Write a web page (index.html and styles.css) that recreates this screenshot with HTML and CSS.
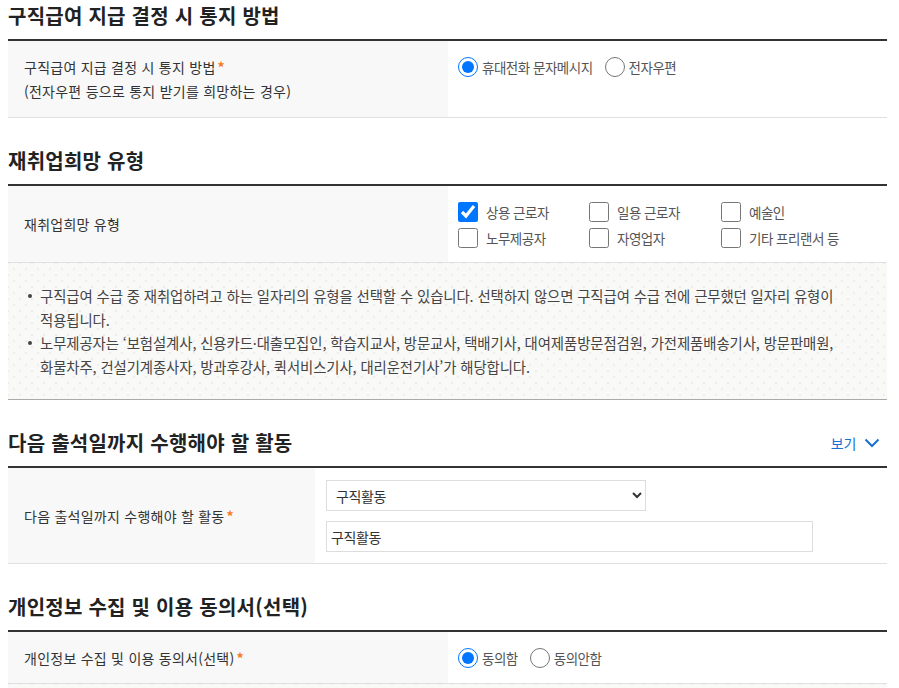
FILE: index.html
```html
<!DOCTYPE html>
<html lang="ko">
<head>
<meta charset="utf-8">
<title>구직급여 신청</title>
<link rel="stylesheet" href="styles.css">
</head>
<body>
<div class="page">
  <section class="sec">
    <div class="sec-head"><h2>구직급여 지급 결정 시 통지 방법</h2></div>
    <div class="tbl">
      <div class="row">
        <div class="lbl half top">구직급여 지급 결정 시 통지 방법<span class="req">*</span><br>(전자우편 등으로 통지 받기를 희망하는 경우)</div>
        <div class="val top">
          <label class="radio"><input type="radio" name="n1" checked><span>휴대전화 문자메시지</span></label>
          <label class="radio"><input type="radio" name="n1"><span>전자우편</span></label>
        </div>
      </div>
    </div>
  </section>

  <section class="sec">
    <div class="sec-head"><h2>재취업희망 유형</h2></div>
    <div class="tbl">
      <div class="row">
        <div class="lbl half mid">재취업희망 유형</div>
        <div class="val checks">
          <label class="chk"><input type="checkbox" checked><span>상용 근로자</span></label>
          <label class="chk"><input type="checkbox"><span>일용 근로자</span></label>
          <label class="chk"><input type="checkbox"><span>예술인</span></label>
          <label class="chk"><input type="checkbox"><span>노무제공자</span></label>
          <label class="chk"><input type="checkbox"><span>자영업자</span></label>
          <label class="chk"><input type="checkbox"><span>기타 프리랜서 등</span></label>
        </div>
      </div>
      <div class="notice">
        <ul>
          <li>구직급여 수급 중 재취업하려고 하는 일자리의 유형을 선택할 수 있습니다. 선택하지 않으면 구직급여 수급 전에 근무했던 일자리 유형이 적용됩니다.</li>
          <li>노무제공자는 ‘보험설계사, 신용카드·대출모집인, 학습지교사, 방문교사, 택배기사, 대여제품방문점검원, 가전제품배송기사, 방문판매원, 화물차주, 건설기계종사자, 방과후강사, 퀵서비스기사, 대리운전기사’가 해당합니다.</li>
        </ul>
      </div>
    </div>
  </section>

  <section class="sec">
    <div class="sec-head">
      <h2>다음 출석일까지 수행해야 할 활동</h2>
      <a class="more" href="#">보기 <svg width="16" height="10" viewBox="0 0 16 10"><polyline points="1.5,1.5 8,8 14.5,1.5" fill="none" stroke="#1a6fd4" stroke-width="2"/></svg></a>
    </div>
    <div class="tbl">
      <div class="row">
        <div class="lbl narrow mid">다음 출석일까지 수행해야 할 활동<span class="req">*</span></div>
        <div class="val fields">
          <select class="sel"><option>구직활동</option></select>
          <input class="txt" type="text" value="구직활동">
        </div>
      </div>
    </div>
  </section>

  <section class="sec">
    <div class="sec-head"><h2>개인정보 수집 및 이용 동의서(선택)</h2></div>
    <div class="tbl">
      <div class="row">
        <div class="lbl half top one">개인정보 수집 및 이용 동의서(선택)<span class="req">*</span></div>
        <div class="val top one">
          <label class="radio"><input type="radio" name="n4" checked><span>동의함</span></label>
          <label class="radio"><input type="radio" name="n4"><span>동의안함</span></label>
        </div>
      </div>
      <div class="notice short"></div>
    </div>
  </section>
</div>
</body>
</html>
```

FILE: styles.css
```css
html, body {
  margin: 0;
  padding: 0;
  background: #fff;
}
body {
  font-family: "Noto Sans CJK KR", "Noto Sans", sans-serif;
  color: #333;
  font-size: 14px;
}
.page {
  width: 879px;
  margin: 0 8px;
}
.sec + .sec {
  margin-top: 27px;
}
.sec-head {
  display: flex;
  justify-content: space-between;
  align-items: center;
  height: 39px;
  padding-bottom: 7px;
  box-sizing: border-box;
}
.sec-head h2 {
  margin: 0;
  font-size: 20px;
  line-height: 32px;
  font-weight: 700;
  color: #222;
  letter-spacing: 0.25px;
}
.more {
  display: flex;
  align-items: center;
  gap: 8px;
  color: #1a6fd4;
  text-decoration: none;
  font-size: 14px;
  padding-right: 7px;
  letter-spacing: -0.3px;
}
.tbl {
  border-top: 2px solid #333;
}
.row {
  display: flex;
  border-bottom: 1px solid #e0e0e0;
}
.lbl {
  background: #f8f8f8;
  padding: 14px 16px;
  box-sizing: border-box;
  line-height: 24px;
  letter-spacing: 0.25px;
  color: #333;
}
.lbl.half { width: 440px; }
.lbl.narrow { width: 307px; }
.lbl.mid {
  display: flex;
  align-items: center;
}
.req {
  color: #f47a1f;
  font-weight: 700;
  margin-left: 2px;
}
.val {
  flex: 1;
  padding: 14px 10px;
  line-height: 24px;
}
.val.top {
  display: flex;
  align-items: flex-start;
  gap: 12px;
}
.radio, .chk {
  display: inline-flex;
  align-items: center;
  color: #555;
  letter-spacing: -0.5px;
  font-size: 13.5px;
}
.radio input {
  width: 20px;
  height: 20px;
  margin: 0 4px 0 0;
  accent-color: #0075ff;
}
.checks {
  display: grid;
  grid-template-columns: 131px 132px 1fr;
  grid-auto-rows: 26px;
  padding: 13px 10px 11px;
}
.chk input {
  width: 20px;
  height: 20px;
  margin: 0 8px 0 0;
  accent-color: #0075ff;
}
.notice {
  background-color: #f9f9f8;
  background-image:
    radial-gradient(circle, #efedeb 1px, transparent 1.2px),
    radial-gradient(circle, #efedeb 1px, transparent 1.2px);
  background-size: 12px 12px, 12px 12px;
  background-position: 0 0, 6px 6px;
  border-bottom: 1px solid #aaa;
  padding: 21px 32px 21px 32px;
}
.notice.short {
  height: 10px;
  padding: 0;
  border-bottom: 0;
}
.notice ul {
  margin: 0;
  padding: 0;
  list-style: none;
}
.notice li {
  position: relative;
  line-height: 23.5px;
  color: #444;
  letter-spacing: -0.1px;
  font-size: 14.4px;
  word-break: keep-all;
}
.notice li::before {
  content: "";
  position: absolute;
  left: -12px;
  top: 10px;
  width: 4px;
  height: 4px;
  border-radius: 50%;
  background: #444;
}
.fields {
  display: flex;
  flex-direction: column;
  align-items: flex-start;
  gap: 10px;
  padding: 12px 11px 11px;
}
.sel {
  width: 320px;
  height: 31px;
  border: 1px solid #ddd;
  border-radius: 0;
  background: #fff;
  font-family: inherit;
  font-size: 14px;
  color: #333;
  padding: 0 5px;
  letter-spacing: -0.4px;
}
.txt {
  width: 487px;
  height: 31px;
  box-sizing: border-box;
  border: 1px solid #ddd;
  border-radius: 0;
  font-family: inherit;
  font-size: 14px;
  color: #333;
  padding: 0 4px;
  letter-spacing: -0.4px;
  outline: none;
}
.val.one, .lbl.one {
  padding-top: 14px;
  padding-bottom: 13px;
}
```
